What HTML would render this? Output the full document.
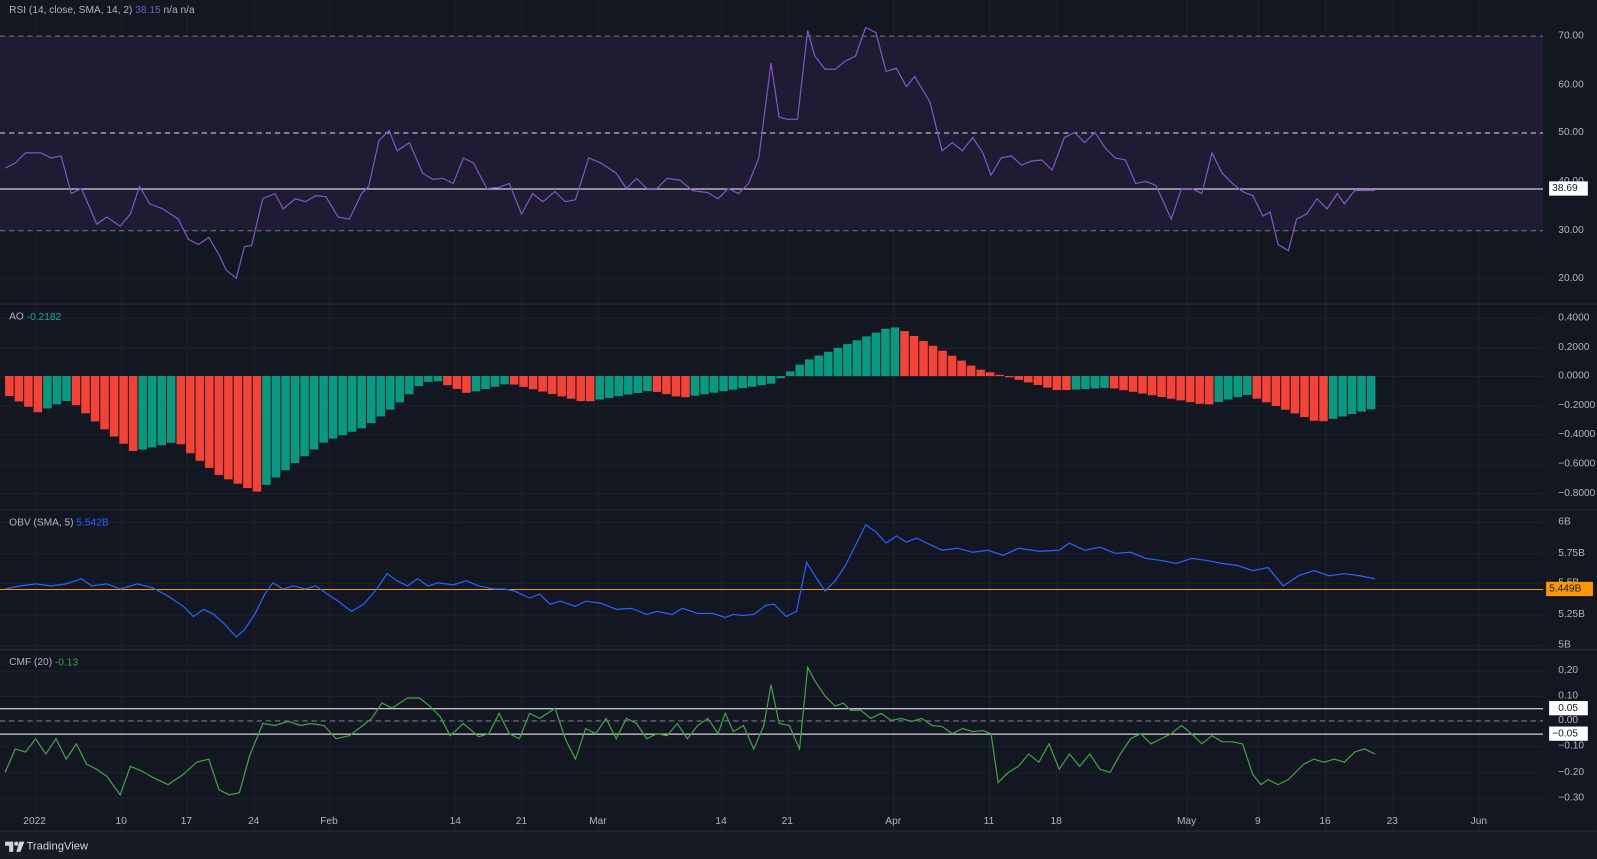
<!DOCTYPE html>
<html><head><meta charset="utf-8"><style>
html,body{margin:0;padding:0;background:#131722;overflow:hidden}
svg{display:block}
text{font-family:"Liberation Sans",sans-serif;font-size:10px;fill:#b2b5be}
</style></head><body>
<svg id="s" width="1597" height="859" viewBox="0 0 1568 843" preserveAspectRatio="none" xmlns="http://www.w3.org/2000/svg">
<rect width="1568" height="843" fill="#131722"/>
<rect x="0" y="35" width="1515" height="191" fill="#1f1b33"/>
<g id="grid" stroke="#1c202b" stroke-width="1"></g>
<g stroke="#2a2e39" stroke-width="1">
<line x1="0" y1="298.5" x2="1568" y2="298.5"/><line x1="0" y1="500.5" x2="1568" y2="500.5"/><line x1="0" y1="637.5" x2="1568" y2="637.5"/><line x1="0" y1="815.5" x2="1568" y2="815.5"/>
</g>
<g stroke="#787b86" stroke-dasharray="5,4" stroke-width="1">
<line x1="0" y1="35.5" x2="1515" y2="35.5"/><line x1="0" y1="226.5" x2="1515" y2="226.5"/><line x1="0" y1="707.5" x2="1515" y2="707.5"/>
</g>
<line x1="0" y1="130.5" x2="1515" y2="130.5" stroke="#e0e3eb" stroke-dasharray="5,4"/>
<line x1="0" y1="185.5" x2="1515" y2="185.5" stroke="#ffffff"/>
<line x1="0" y1="578.5" x2="1515" y2="578.5" stroke="#ff9800"/>
<line x1="0" y1="695.5" x2="1515" y2="695.5" stroke="#ffffff"/>
<line x1="0" y1="720.5" x2="1515" y2="720.5" stroke="#ffffff"/>
<g id="ao"></g>
<polyline id="rsi" fill="none" stroke="#7e57c2" stroke-width="1.2"/>
<polyline id="obv" fill="none" stroke="#2962ff" stroke-width="1.2"/>
<polyline id="cmf" fill="none" stroke="#43a047" stroke-width="1.2"/>
<rect x="0" y="816" width="1568" height="27" fill="#171b26"/>
<g id="lbl"></g>
<text x="9" y="10" dominant-baseline="middle">RSI (14, close, SMA, 14, 2) <tspan fill="#7e57c2">38.15</tspan> n/a  n/a</text>
<text x="9" y="311" dominant-baseline="middle">AO <tspan fill="#26a69a">-0.2182</tspan></text>
<text x="9" y="513" dominant-baseline="middle">OBV (SMA, 5) <tspan fill="#2962ff">5.542B</tspan></text>
<text x="9" y="650" dominant-baseline="middle">CMF (20) <tspan fill="#43a047">-0.13</tspan></text>
<rect x="1521" y="178" width="38" height="14" fill="#fff"/><text x="1524" y="185" dominant-baseline="middle" style="fill:#131722">38.69</text>
<rect x="1518" y="571" width="46" height="14" fill="#ff9800"/><text x="1521" y="578" dominant-baseline="middle" style="fill:#131722">5.449B</text>
<rect x="1521" y="688" width="38" height="14" fill="#fff"/><text x="1530" y="695" dominant-baseline="middle" style="fill:#131722">0.05</text>
<rect x="1521" y="713" width="38" height="14" fill="#fff"/><text x="1524" y="720" dominant-baseline="middle" style="fill:#131722">−0.05</text>
<g transform="translate(5,826)"><path d="M0 0h8v10h-4v-6h-4z" fill="#d1d4dc"/><circle cx="11" cy="2" r="2" fill="#d1d4dc"/><path d="M14 0h5l-4 10h-4z" fill="#d1d4dc"/></g>
<text x="26" y="831" dominant-baseline="middle" style="fill:#d1d4dc;font-size:11px">TradingView</text>
</svg>
<script>
const NS="http://www.w3.org/2000/svg";
function el(t,a,p){const e=document.createElementNS(NS,t);for(const k in a)e.setAttribute(k,a[k]);p.appendChild(e);return e}
const grid=document.getElementById('grid'),lbl=document.getElementById('lbl');
const xs=[[34,'2022'],[119,'10'],[183,'17'],[249,'24'],[323,'Feb'],[447,'14'],[512,'21'],[587,'Mar'],[708,'14'],[773,'21'],[877,'Apr'],[971,'11'],[1037,'18'],[1165,'May'],[1235,'9'],[1301,'16'],[1367,'23'],[1452,'Jun']];
xs.forEach(([x,t])=>{el('line',{x1:x+.5,y1:0,x2:x+.5,y2:815},grid);const e=el('text',{x:x,y:806,'text-anchor':'middle','dominant-baseline':'middle'},lbl);e.textContent=t;});
[[35,'70.00'],[83,'60.00'],[130,'50.00'],[178,'40.00'],[226,'30.00'],[273,'20.00'],[312,'0.4000'],[341,'0.2000'],[369,'0.0000'],[398,'−0.2000'],[426,'−0.4000'],[455,'−0.6000'],[484,'−0.8000'],[512,'6B'],[543,'5.75B'],[572,'5.5B'],[603,'5.25B'],[633,'5B'],[658,'0.20'],[683,'0.10'],[707,'0.00'],[732,'−0.10'],[758,'−0.20'],[783,'−0.30']].forEach(([y,t])=>{el('line',{x1:0,y1:y+.5,x2:1515,y2:y+.5},grid);const e=el('text',{x:1530,y:y,'dominant-baseline':'middle'},lbl);e.textContent=t;});
function pl(id,a){const p=[];for(let i=0;i<a.length;i+=2)p.push(a[i]+','+a[i+1]);document.getElementById(id).setAttribute('points',p.join(' '))}
pl('rsi',[5,165,15,160,25,150,40,150,50,155,60,153,70,190,80,185,95,220,105,213,118,222,128,210,137,183,147,200,160,205,175,215,185,235,195,240,205,233,215,250,222,265,232,273,240,242,247,241,258,195,270,190,278,205,290,195,300,198,310,192,320,193,332,213,343,215,355,190,362,183,372,138,382,128,390,148,402,140,415,170,425,176,435,175,445,180,455,155,465,160,478,185,490,184,500,180,512,210,523,190,533,198,545,188,555,198,565,196,578,155,590,160,605,170,615,185,625,175,635,185,645,185,655,175,668,177,680,187,695,189,705,195,715,185,725,190,735,180,745,155,757,62,765,115,773,117,783,117,793,30,800,55,810,68,820,68,830,60,840,55,850,27,860,32,870,70,880,67,890,85,898,75,913,100,925,148,935,140,945,148,955,135,965,150,973,172,983,155,993,153,1003,162,1013,158,1023,157,1033,167,1045,135,1055,130,1065,140,1075,130,1085,145,1095,155,1105,157,1115,180,1125,178,1135,182,1150,215,1160,185,1170,185,1180,190,1190,150,1200,170,1210,180,1220,188,1230,192,1240,212,1247,208,1255,240,1265,246,1273,215,1283,210,1293,195,1303,205,1313,190,1320,200,1330,187,1350,187]);
pl('obv',[5,578,20,575,35,573,50,575,65,573,80,568,90,575,105,573,118,578,135,573,150,577,165,585,180,595,190,605,200,598,210,603,220,612,232,625,240,618,250,603,260,583,268,572,278,578,288,575,300,578,310,575,320,582,332,590,345,600,357,593,370,578,380,563,390,570,400,575,410,568,420,575,430,572,445,574,458,570,470,575,485,578,495,578,505,580,520,587,530,583,540,593,550,590,565,595,575,590,590,592,605,598,620,597,635,603,645,600,660,603,670,597,685,602,700,602,712,606,720,603,730,604,740,603,752,594,760,593,772,605,782,600,792,552,800,565,810,580,820,570,830,555,840,535,850,515,860,522,870,533,880,526,890,532,900,528,910,533,925,540,940,538,955,542,970,540,985,545,1000,538,1020,541,1040,540,1050,533,1065,540,1080,537,1095,543,1110,542,1125,548,1140,550,1155,553,1170,548,1185,550,1200,553,1215,555,1230,560,1245,557,1260,575,1275,565,1290,560,1305,565,1320,563,1335,565,1350,568]);
pl('cmf',[5,758,15,735,25,738,35,725,45,740,55,725,65,745,75,730,85,750,95,755,105,762,118,780,128,752,140,757,150,763,165,770,180,760,193,748,205,745,215,775,225,780,235,778,245,742,258,710,270,712,283,708,295,712,305,710,318,712,330,725,343,722,355,713,365,705,375,690,385,695,400,685,412,685,422,693,432,703,442,722,455,710,470,723,480,720,490,700,500,720,510,725,520,700,530,705,545,695,555,725,565,745,575,715,585,720,595,705,605,725,615,705,625,710,635,725,645,720,655,722,665,710,675,725,685,712,695,705,705,720,712,700,720,718,730,712,740,735,750,712,757,672,765,710,775,712,785,735,793,655,800,668,810,683,820,693,828,690,835,697,845,697,855,705,865,700,875,707,885,705,895,708,905,705,915,712,925,713,935,720,945,715,955,718,965,717,973,720,980,768,990,758,1000,752,1010,740,1020,748,1030,730,1040,755,1050,740,1060,752,1070,740,1080,755,1090,758,1100,740,1110,725,1120,720,1130,730,1140,725,1150,720,1160,712,1170,720,1180,730,1190,722,1200,728,1210,728,1220,730,1230,760,1238,770,1245,765,1255,770,1265,765,1280,750,1290,745,1300,748,1310,745,1320,748,1330,738,1340,735,1350,740]);
const k=[[5,-0.12],[38,-0.25],[65,-0.17],[75,-0.2],[100,-0.35],[132,-0.52],[145,-0.5],[175,-0.45],[190,-0.55],[215,-0.68],[252,-0.8],[262,-0.75],[290,-0.6],[320,-0.45],[360,-0.35],[390,-0.2],[415,-0.05],[428,-0.03],[460,-0.12],[500,-0.05],[575,-0.18],[640,-0.1],[670,-0.15],[760,-0.05],[790,0.1],[875,0.34],[883,0.33],[960,0.05],[1040,-0.1],[1090,-0.08],[1185,-0.2],[1225,-0.13],[1295,-0.32],[1352,-0.22]];
function f(x){for(let i=0;i<k.length-1;i++){if(x<=k[i+1][0]){const t=(x-k[i][0])/(k[i+1][0]-k[i][0]);return k[i][1]+t*(k[i+1][1]-k[i][1]);}}return k[k.length-1][1]}
const ao=document.getElementById('ao');const w=9.35;let prev=f(5-w/2)+1;
for(let x=5;x<1350;x+=w){const v=f(x+w/2);const y0=369,y1=369-v*142.5;const c=(v>prev)?'#089981':'#f44336';prev=v;
el('rect',{x:x.toFixed(2),y:Math.min(y0,y1).toFixed(1),width:(w-1).toFixed(2),height:Math.max(1,Math.abs(y1-y0)).toFixed(1),fill:c},ao);}
</script>
</body></html>
